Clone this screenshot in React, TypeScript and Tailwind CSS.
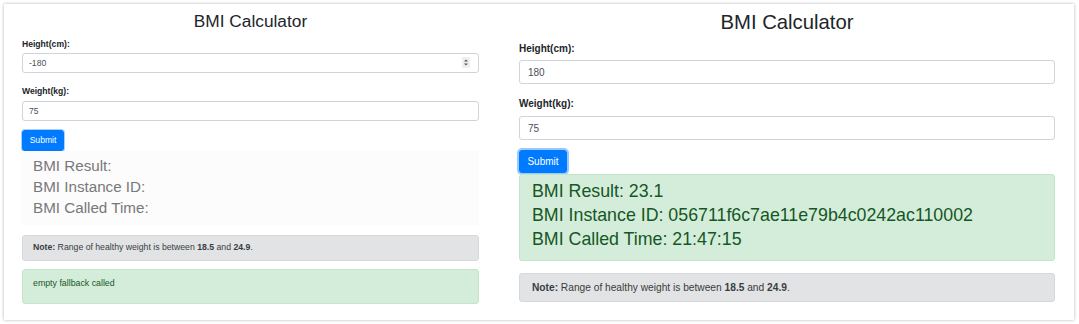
import React from "react";

const font = { fontFamily: '"Liberation Sans", Arial, Helvetica, sans-serif' };

function Spinner() {
  return (
    <svg width="8" height="11" viewBox="0 0 8 11" className="absolute right-[9px] top-[4px]">
      <rect x="0" y="0" width="8" height="11" fill="#efefef" />
      <path d="M2 4.5 L4 2.5 L6 4.5 Z" fill="#555" />
      <path d="M2 6.5 L4 8.5 L6 6.5 Z" fill="#555" />
    </svg>
  );
}

function LeftPanel() {
  return (
    <div className="ml-[18px] w-[457px] flex flex-col">
      <div className="h-[34px] leading-[34px] text-center text-[17.3px] text-[#212529]">BMI Calculator</div>
      <div className="h-[12px] leading-[12px] text-[8.6px] font-bold text-[#212529]">Height(cm):</div>
      <div className="relative mt-[3px] h-[20px]">
        <input
          readOnly
          value="-180"
          className="block w-full h-[20px] border border-[#ced4da] rounded-[3px] px-[6px] text-[8.6px] text-[#495057] bg-white outline-none"
          style={font}
        />
        <Spinner />
      </div>
      <div className="mt-[12px] h-[12px] leading-[12px] text-[8.6px] font-bold text-[#212529]">Weight(kg):</div>
      <input
        readOnly
        value="75"
        className="block mt-[4px] w-full h-[20px] border border-[#ced4da] rounded-[3px] px-[6px] text-[8.6px] text-[#495057] bg-white outline-none"
        style={font}
      />
      <div className="mt-[9px] flex">
        <button
          className="h-[21px] w-[42px] rounded-[3px] bg-[#007bff] text-white text-[8.6px] border border-[#007bff] shadow-[0_0_0_1px_rgba(0,123,255,0.35)]"
          style={font}
        >
          Submit
        </button>
      </div>
      <div className="h-[74px] bg-[#fcfcfc] pt-[4px] pl-[11px] text-[15.2px] leading-[21px] text-[#787878]">
        <div>BMI Result:</div>
        <div>BMI Instance ID:</div>
        <div>BMI Called Time:</div>
      </div>
      <div className="mt-[10px] h-[26px] flex items-center bg-[#e2e3e5] border border-[#d6d8db] rounded-[3px] pl-[10px] text-[8.7px] text-[#383d41]">
        <span>
          <b>Note:</b> Range of healthy weight is between <b>18.5</b> and <b>24.9</b>.
        </span>
      </div>
      <div className="mt-[8px] h-[35px] bg-[#d4edda] border border-[#c3e6cb] rounded-[3px] pl-[10px] pt-[7px] text-[8.8px] leading-[12px] text-[#155724]">
        empty fallback called
      </div>
    </div>
  );
}

function RightPanel() {
  return (
    <div className="ml-[40px] w-[536px] flex flex-col">
      <div className="h-[36px] leading-[36px] text-center text-[20.3px] text-[#212529]">BMI Calculator</div>
      <div className="mt-[3px] h-[12px] leading-[12px] text-[10px] font-bold text-[#212529]">Height(cm):</div>
      <input
        readOnly
        value="180"
        className="block mt-[5px] w-full h-[24px] border border-[#ced4da] rounded-[3px] px-[8px] text-[10px] text-[#495057] bg-white outline-none"
        style={font}
      />
      <div className="mt-[14px] h-[12px] leading-[12px] text-[10px] font-bold text-[#212529]">Weight(kg):</div>
      <input
        readOnly
        value="75"
        className="block mt-[6px] w-full h-[24px] border border-[#ced4da] rounded-[3px] px-[8px] text-[10px] text-[#495057] bg-white outline-none"
        style={font}
      />
      <div className="mt-[10px] flex">
        <button
          className="h-[23px] w-[48px] rounded-[3px] bg-[#007bff] text-white text-[10px] border border-[#007bff] shadow-[0_0_0_2px_rgba(0,123,255,0.4)]"
          style={font}
        >
          Submit
        </button>
      </div>
      <div className="mt-[1px] h-[87px] bg-[#d4edda] border border-[#c3e6cb] rounded-[3px] pt-[4px] pl-[12px] text-[17.8px] leading-[24px] text-[#155724]">
        <div>BMI Result: 23.1</div>
        <div>BMI Instance ID: 056711f6c7ae11e79b4c0242ac110002</div>
        <div>BMI Called Time: 21:47:15</div>
      </div>
      <div className="mt-[12px] h-[29px] flex items-center bg-[#e2e3e5] border border-[#d6d8db] rounded-[3px] pl-[12px] text-[10.2px] text-[#383d41]">
        <span>
          <b>Note:</b> Range of healthy weight is between <b>18.5</b> and <b>24.9</b>.
        </span>
      </div>
    </div>
  );
}

export default function App() {
  return (
    <div className="w-[1079px] h-[324px] bg-white pt-[4px] pl-[4px]" style={font}>
      <div className="w-[1070px] h-[316px] bg-white shadow-[0_0_3px_rgba(0,0,0,0.3)] flex">
        <LeftPanel />
        <RightPanel />
      </div>
    </div>
  );
}
